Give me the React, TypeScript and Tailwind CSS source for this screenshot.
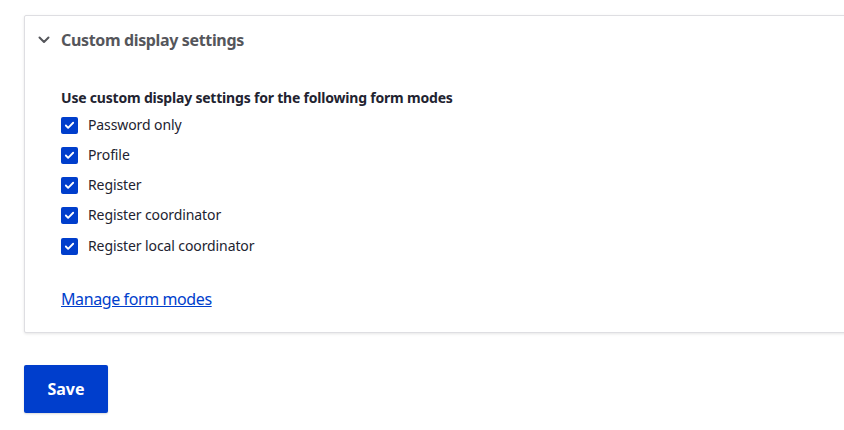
import { Check } from "lucide-react";

const modes = ["Password only", "Profile", "Register", "Register coordinator", "Register local coordinator"];

export default function App() {
  return (
    <div className="h-[430px] w-[844px] overflow-hidden bg-white text-[#222330]" style={{ fontFamily: "'Noto Sans', sans-serif" }}>
      <div className="pl-6 pt-[15px]">
        <div className="w-[900px] rounded-[2px] border border-[#dedee2] bg-white shadow-[0_1px_3px_rgba(0,0,0,0.1)]">
          <div className="flex h-[48px] items-center pl-[13px]">
            <svg width="12" height="8" viewBox="0 0 12 8" className="text-[#55565b]">
              <path d="M1.5 1.5 L6 6 L10.5 1.5" fill="none" stroke="currentColor" strokeWidth="2" strokeLinecap="round" strokeLinejoin="round" />
            </svg>
            <span className="ml-[11px] text-[16px] font-bold leading-[24px] tracking-[-0.35px] text-[#55565b]">Custom display settings</span>
          </div>
          <div className="pl-9 pt-[25px] pb-[21px]">
            <p className="text-[14px] font-bold leading-[18px] tracking-[-0.2px]">Use custom display settings for the following form modes</p>
            <div className="mt-[9px] flex flex-col gap-[12px]">
              {modes.map((m, i) => (
                <label key={m} className={`flex h-[18px] items-center ${i === 4 ? "mt-[1px]" : ""}`}>
                  <span className="flex h-[17px] w-[17px] items-center justify-center rounded-[2px] bg-[#003ecc]">
                    <Check className="h-[11px] w-[11px] text-white" strokeWidth={4} />
                  </span>
                  <span className="ml-[10px] text-[14px] leading-[18px] tracking-[-0.1px]">{m}</span>
                </label>
              ))}
            </div>
            <a href="#" className="mt-[32px] block w-fit text-[16px] leading-[24px] tracking-[-0.4px] text-[#003ecc] underline">Manage form modes</a>
          </div>
        </div>
        <button className="mt-[32px] h-[48px] w-[84px] rounded-[2px] bg-[#003ecc] text-[16px] font-bold text-white shadow-[0_1px_2px_rgba(0,0,0,0.15)]">Save</button>
      </div>
    </div>
  );
}
